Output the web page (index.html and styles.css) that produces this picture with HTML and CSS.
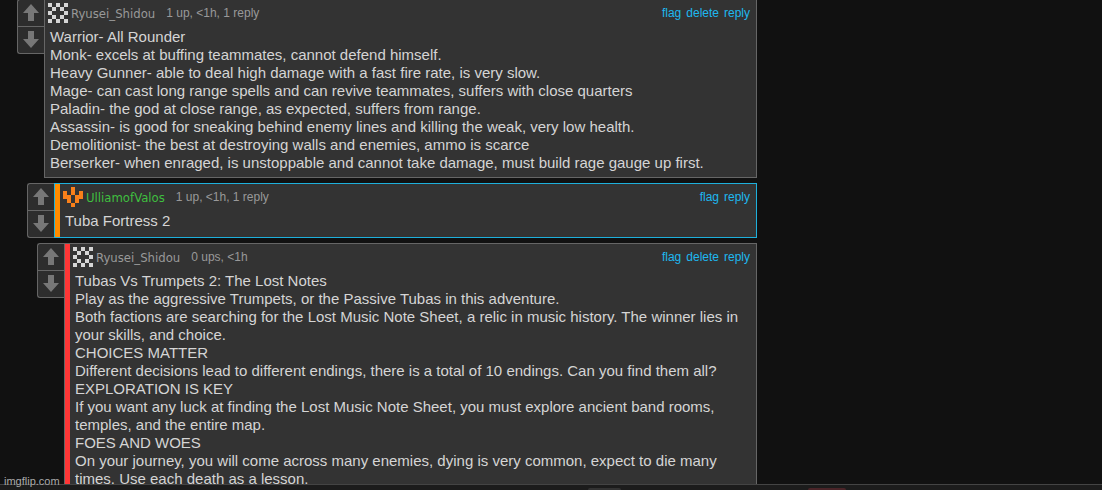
FILE: index.html
```html
<!DOCTYPE html>
<html lang="en">
<head>
<meta charset="utf-8">
<title>Comments</title>
<link rel="stylesheet" href="styles.css">
</head>
<body>
<svg class="defs" aria-hidden="true">
  <symbol id="up" viewBox="0 0 16 17"><path d="M8 0l8 9h-5v8H5V9H0z"/></symbol>
  <symbol id="down" viewBox="0 0 16 17"><path d="M8 17l8-9h-5V0H5v8H0z"/></symbol>
  <symbol id="checker" viewBox="0 0 20 20"><path d="M0 0h4v4H0zM8 0h4v4H8zM16 0h4v4h-4zM4 4h4v4H4zM12 4h4v4h-4zM0 8h4v4H0zM16 8h4v4h-4zM4 12h4v4H4zM12 12h4v4h-4zM0 16h4v4H0zM8 16h4v4H8zM16 16h4v4h-4z"/></symbol>
  <symbol id="crown" viewBox="0 0 20 20"><path d="M8 0h4v8H8zM0 4h4v4h4v8H4v-4H0zM16 4h4v8h-4v4h-4V8h4zM8 16h4v4H8z"/></symbol>
</svg>
<main class="thread">
  <article class="comment">
    <div class="votes">
      <button class="vote" aria-label="Upvote"><svg><use href="#up"/></svg></button>
      <button class="vote" aria-label="Downvote"><svg><use href="#down"/></svg></button>
    </div>
    <div class="card">
      <header class="head">
        <svg class="badge"><use href="#checker"/></svg>
        <a class="user" href="#">Ryusei_Shidou</a>
        <span class="meta">1 up, &lt;1h, 1 reply</span>
        <nav class="actions"><a href="#">flag</a><a href="#">delete</a><a href="#">reply</a></nav>
      </header>
      <p class="text">Warrior- All Rounder<br>Monk- excels at buffing teammates, cannot defend himself.<br>Heavy Gunner- able to deal high damage with a fast fire rate, is very slow.<br>Mage- can cast long range spells and can revive teammates, suffers with close quarters<br>Paladin- the god at close range, as expected, suffers from range.<br>Assassin- is good for sneaking behind enemy lines and killing the weak, very low health.<br>Demolitionist- the best at destroying walls and enemies, ammo is scarce<br>Berserker- when enraged, is unstoppable and cannot take damage, must build rage gauge up first.</p>
    </div>
  </article>
  <article class="comment level-1">
    <div class="votes">
      <button class="vote" aria-label="Upvote"><svg><use href="#up"/></svg></button>
      <button class="vote" aria-label="Downvote"><svg><use href="#down"/></svg></button>
    </div>
    <div class="card striped selected">
      <header class="head">
        <svg class="badge orange"><use href="#crown"/></svg>
        <a class="user green" href="#">UlliamofValos</a>
        <span class="meta">1 up, &lt;1h, 1 reply</span>
        <nav class="actions"><a href="#">flag</a><a href="#">reply</a></nav>
      </header>
      <p class="text">Tuba Fortress 2</p>
    </div>
  </article>
  <article class="comment level-2">
    <div class="votes">
      <button class="vote" aria-label="Upvote"><svg><use href="#up"/></svg></button>
      <button class="vote" aria-label="Downvote"><svg><use href="#down"/></svg></button>
    </div>
    <div class="card striped red">
      <header class="head">
        <svg class="badge"><use href="#checker"/></svg>
        <a class="user" href="#">Ryusei_Shidou</a>
        <span class="meta">0 ups, &lt;1h</span>
        <nav class="actions"><a href="#">flag</a><a href="#">delete</a><a href="#">reply</a></nav>
      </header>
      <p class="text">Tubas Vs Trumpets 2: The Lost Notes<br>Play as the aggressive Trumpets, or the Passive Tubas in this adventure.<br>Both factions are searching for the Lost Music Note Sheet, a relic in music history. The winner lies in your skills, and choice.<br>CHOICES MATTER<br>Different decisions lead to different endings, there is a total of 10 endings. Can you find them all?<br>EXPLORATION IS KEY<br>If you want any luck at finding the Lost Music Note Sheet, you must explore ancient band rooms, temples, and the entire map.<br>FOES AND WOES<br>On your journey, you will come across many enemies, dying is very common, expect to die many times. Use each death as a lesson.</p>
    </div>
  </article>
</main>
<footer class="bar"><span class="tab"></span><span class="tab pink"></span></footer>
<div class="watermark">imgflip.com</div>
</body>
</html>
```
FILE: styles.css
```css
* { box-sizing: border-box; }
body {
  margin: 0;
  height: 100vh;
  display: flex;
  flex-direction: column;
  overflow: hidden;
  background: #111;
  color: #d5d5d5;
  font-family: "Liberation Sans", Arial, sans-serif;
}
.defs { display: none; }
a { text-decoration: none; }
.thread {
  flex: 1;
  min-height: 0;
  overflow: hidden;
  width: 100%;
  max-width: 757px;
  padding-left: 17px;
  display: flex;
  flex-direction: column;
  gap: 5px;
}
.comment { display: flex; align-items: flex-start; flex: none; }
.comment:first-child { margin-top: -1px; }
.level-1 { margin-left: 10px; }
.level-2 { margin-left: 20px; }
.votes {
  flex: none;
  width: 27px;
  border: 1px solid #666;
  border-right: 0;
  border-radius: 3px 0 0 3px;
  background: #2d2d2d;
}
.vote {
  display: flex;
  align-items: center;
  justify-content: center;
  width: 100%;
  height: 26px;
  padding: 0 0 1px;
  border: 0;
  background: none;
  fill: #777;
}
.vote + .vote { height: 27px; border-top: 1px solid #666; }
.vote svg { width: 16px; height: 17px; }
.card {
  flex: 1;
  min-width: 0;
  min-height: 55px;
  padding: 0 5px 5px;
  border: 1px solid #666;
  background: #333;
}
.striped { padding-left: 10px; }
.selected { border-color: #1eb0dc; box-shadow: inset 5px 0 #ff8c00; }
.red { box-shadow: inset 5px 0 #ff3636; }
.head { display: flex; align-items: center; height: 26px; margin-bottom: 2px; font-size: 12px; }
.badge { width: 20px; height: 20px; margin-left: -2px; margin-right: 3px; fill: #d5d5d5; shape-rendering: crispEdges; }
.orange { fill: #f9801a; }
.user { color: #999; font-family: "DejaVu Sans Condensed", "DejaVu Sans", sans-serif; font-size: 13px; }
.green { color: #3fbf3f; }
.meta { margin-left: 11px; color: #999; }
.actions { display: flex; gap: 5px; margin-left: auto; padding-right: 1px; }
.actions a { color: #1eb8f0; }
.text { margin: 0; font-size: 15px; line-height: 18px; }
.bar {
  flex: none;
  display: flex;
  align-items: flex-end;
  gap: 187px;
  height: 6px;
  padding-left: 588px;
  border-top: 1px solid #444;
  background: #1c1c1c;
}
.tab { width: 33px; height: 2px; border-radius: 3px 3px 0 0; background: #333; }
.pink { width: 38px; background: #4a2428; }
.watermark {
  position: absolute;
  left: 4px;
  bottom: 2px;
  color: #aaa;
  font-size: 11px;
  line-height: 13px;
}
```
